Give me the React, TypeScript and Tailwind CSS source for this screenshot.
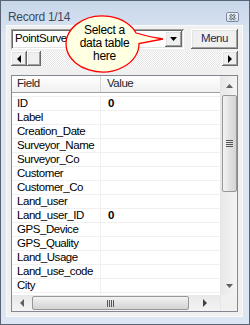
import React from "react";

const rows: [string, string][] = [
  ["ID", "0"],
  ["Label", ""],
  ["Creation_Date", ""],
  ["Surveyor_Name", ""],
  ["Surveyor_Co", ""],
  ["Customer", ""],
  ["Customer_Co", ""],
  ["Land_user", ""],
  ["Land_user_ID", "0"],
  ["GPS_Device", ""],
  ["GPS_Quality", ""],
  ["Land_Usage", ""],
  ["Land_use_code", ""],
  ["City", ""],
  ["Location_name", ""],
];

const raised =
  "bg-[#f0f0f0] shadow-[inset_-1px_-1px_#696969,inset_1px_1px_#ffffff,inset_-2px_-2px_#a0a0a0,inset_2px_2px_#e3e3e3]";

function Tri({ dir, color = "#000" }: { dir: "l" | "r" | "d" | "u"; color?: string }) {
  const pts =
    dir === "l"
      ? "4,0 4,8 0,4"
      : dir === "r"
      ? "0,0 0,8 4,4"
      : dir === "d"
      ? "0,0 7,0 3.5,4"
      : "0,4 7,4 3.5,0";
  const w = dir === "l" || dir === "r" ? 4 : 7;
  const h = dir === "l" || dir === "r" ? 8 : 4;
  return (
    <svg width={w} height={h} viewBox={`0 0 ${w} ${h}`}>
      <polygon points={pts} fill={color} />
    </svg>
  );
}

function Grip({ vertical }: { vertical: boolean }) {
  return vertical ? (
    <svg width="7" height="7" viewBox="0 0 7 7">
      {[0, 2, 4, 6].map((y) => (
        <rect key={y} x="0" y={y} width="7" height="1" fill="#555" />
      ))}
    </svg>
  ) : (
    <svg width="7" height="7" viewBox="0 0 7 7">
      {[0, 2, 4, 6].map((x) => (
        <rect key={x} x={x} y="0" width="1" height="7" fill="#555" />
      ))}
    </svg>
  );
}

export default function App() {
  return (
    <div className="relative w-[250px] h-[325px] border border-[#5b6472] bg-[linear-gradient(#c7d6ea,#dce6f3_36px,#dce6f3)] font-['Liberation_Sans',Arial,sans-serif] text-[11.5px] tracking-[-0.45px] text-black flex flex-col overflow-hidden">
      {/* caption */}
      <div className="h-[24px] shrink-0 flex items-center pt-[8px] pl-[7px] pr-[10px]">
        <span className="text-[12px] tracking-[-0.3px] text-[#3d4a5c] leading-none">Record 1/14</span>
        <svg className="ml-auto" width="13" height="10" viewBox="0 0 13 10">
          <defs>
            <linearGradient id="cb" x1="0" y1="0" x2="0" y2="1">
              <stop offset="0" stopColor="#f7f9fc" />
              <stop offset="1" stopColor="#d3dce8" />
            </linearGradient>
          </defs>
          <rect x="0.5" y="0.5" width="12" height="9" rx="1.5" fill="url(#cb)" stroke="#7d8ba0" />
          <path d="M4 2.5 L9 7.5 M9 2.5 L4 7.5" stroke="#5a6679" strokeWidth="2.6" />
          <path d="M4 2.5 L9 7.5 M9 2.5 L4 7.5" stroke="#ffffff" strokeWidth="1" />
        </svg>
      </div>

      {/* panel */}
      <div className="ml-[5px] mr-[6px] h-[292px] shrink-0 bg-[#f0f0f0] border border-[#f9fafc] flex flex-col pt-[3px] px-[4px] pb-[4px]">
        {/* combo + menu */}
        <div className="h-[20px] flex shrink-0">
          <div className="w-[173px] h-full bg-white shadow-[inset_1px_1px_#a0a0a0,inset_-1px_-1px_#ffffff,inset_2px_2px_#696969,inset_-2px_-2px_#e3e3e3] flex items-center pl-[4px] pr-[2px]">
            <span className="flex-1 overflow-hidden whitespace-nowrap leading-none">PointSurvey_DataTable_01</span>
            <div className={`w-[17px] h-[16px] ${raised} flex items-center justify-center shrink-0`}>
              <Tri dir="d" />
            </div>
          </div>
          <div className={`ml-auto w-[47px] h-full ${raised} flex items-center justify-center text-[#1e2b58]`}>
            Menu
          </div>
        </div>

        {/* classic scroll bar */}
        <div className="mt-[2px] h-[15px] flex shrink-0 bg-[repeating-conic-gradient(#ffffff_0%_25%,#e4e4e4_0%_50%)] bg-[length:2px_2px]">
          <div className={`w-[16px] h-full ${raised} flex items-center justify-center`}>
            <Tri dir="l" />
          </div>
          <div className={`w-[14px] h-full ${raised}`} />
          <div className="flex-1" />
          <div className={`w-[16px] h-full ${raised} flex items-center justify-center`}>
            <Tri dir="r" />
          </div>
        </div>

        {/* grid */}
        <div className="mt-[9px] h-[237px] shrink-0 border border-[#828790] bg-white flex">
          <div className="w-[208px] flex flex-col">
            {/* header */}
            <div className="h-[17px] flex border-b border-[#a0a0a0] bg-[linear-gradient(#ffffff,#f0f0f0)] shrink-0">
              <div className="w-[89px] border-r border-[#d5d5d5] pl-[5px] flex items-center text-[#1e1e1e]">Field</div>
              <div className="flex-1 pl-[6px] flex items-center text-[#1e1e1e]">Value</div>
            </div>
            {/* rows */}
            <div className="flex-1 overflow-hidden pt-[3px]">
              {rows.map(([f, v]) => (
                <div key={f} className="h-[14px] border-t border-[#f0f0f0] flex leading-[13px]">
                  <div className="w-[89px] border-r border-[#f0f0f0] pl-[5px] whitespace-nowrap overflow-hidden">{f}</div>
                  <div className="flex-1 pl-[7px] font-bold">{v}</div>
                </div>
              ))}
            </div>
            {/* horizontal scrollbar */}
            <div className="h-[16px] shrink-0 bg-[linear-gradient(#e8e8e8,#f4f4f4)] flex items-center">
              <div className="w-[20px] h-full flex items-center justify-center">
                <Tri dir="l" color="#606060" />
              </div>
              <div className="w-[157px] h-[14px] rounded-[2px] border border-[#979797] bg-[linear-gradient(#f3f3f3,#e2e2e2_50%,#d4d4d4)] flex items-center justify-center">
                <Grip vertical={false} />
              </div>
              <div className="flex-1 h-full flex items-center justify-center">
                <Tri dir="r" color="#404040" />
              </div>
            </div>
          </div>
          {/* vertical scrollbar */}
          <div className="w-[17px] flex flex-col border-l border-[#e6e6e6]">
            <div className="h-[219px] bg-[linear-gradient(90deg,#e8e8e8,#f4f4f4)] flex flex-col items-center">
              <div className="h-[19px] flex items-center justify-center">
                <Tri dir="u" color="#606060" />
              </div>
              <div className="w-[15px] h-[97px] rounded-[2px] border border-[#979797] bg-[linear-gradient(90deg,#f3f3f3,#e2e2e2_50%,#d4d4d4)] flex items-center justify-center">
                <Grip vertical={true} />
              </div>
              <div className="flex-1" />
              <div className="h-[18px] flex items-center justify-center">
                <Tri dir="d" color="#606060" />
              </div>
            </div>
            <div className="flex-1 bg-[#f0f0f0]" />
          </div>
        </div>
      </div>

      {/* callout */}
      <svg className="absolute left-0 top-0 pointer-events-none" width="250" height="100" viewBox="0 0 250 100">
        <path
          d="M135.1 32 A36.5 28 0 1 0 138 42.5 L162 38 Q148 36 135.1 32 Z"
          fill="#ffffe1"
          stroke="#ff0000"
          strokeWidth="1.3"
        />
      </svg>
      <div className="absolute left-[64px] top-[23px] w-[79px] text-center text-[12px] leading-[13px] text-black tracking-[-0.3px] pointer-events-none">
        <div>Select a</div>
        <div>data table</div>
        <div>here</div>
      </div>
    </div>
  );
}
